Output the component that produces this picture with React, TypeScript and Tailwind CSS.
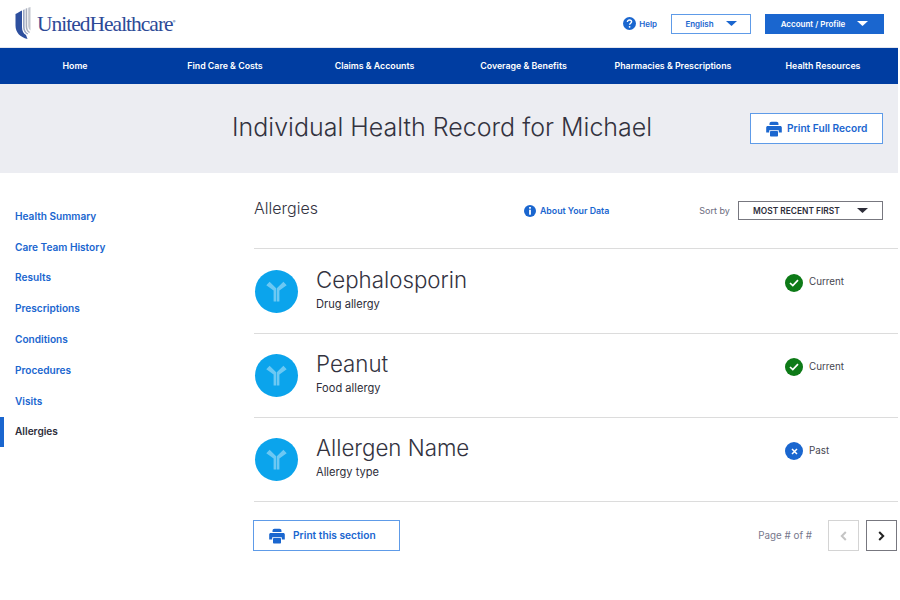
// App.tsx
import { ReactNode } from 'react';

const navItems: { label: string; w: string }[] = [
  { label: 'Home', w: 'w-[150px]' },
  { label: 'Find Care & Costs', w: 'w-[150px]' },
  { label: 'Claims & Accounts', w: 'w-[149px]' },
  { label: 'Coverage & Benefits', w: 'w-[149px]' },
  { label: 'Pharmacies & Prescriptions', w: 'w-[150px]' },
  { label: 'Health Resources', w: 'w-[150px]' },
];

const sideItems = [
  'Health Summary',
  'Care Team History',
  'Results',
  'Prescriptions',
  'Conditions',
  'Procedures',
  'Visits',
];

const allergies: { name: string; type: string; status: 'Current' | 'Past'; h: string }[] = [
  { name: 'Cephalosporin', type: 'Drug allergy', status: 'Current', h: 'h-[85px]' },
  { name: 'Peanut', type: 'Food allergy', status: 'Current', h: 'h-[84px]' },
  { name: 'Allergen Name', type: 'Allergy type', status: 'Past', h: 'h-[84px]' },
];

function Logo() {
  return (
    <div className="flex items-center">
      <svg width="16" height="33" viewBox="0 0 16 33" className="shrink-0">
        <path d="M0.5 7 C2.5 6 5 4.5 7 3.5 V20 C7 24 8.5 26.5 11 28 L12.5 32 C5 30 0.5 25.5 0.5 18.5 Z" fill="#2d4f9e" />
        <path d="M8 3 L9.6 2.2 V19.5 C9.6 23 10.8 25.3 13.2 26.5 L12.4 27.6 C9.6 26.2 8 23.5 8 19.5 Z" fill="#9aa6c2" />
        <path d="M10.6 1.7 L12.2 1 V19 C12.2 22 13 23.8 15 25 L14.2 26 C11.8 24.7 10.6 22.5 10.6 19 Z" fill="#a9afbd" />
        <path d="M13.2 0.7 L15.5 0 V23.5 C14 22.5 13.2 20.8 13.2 18.5 Z" fill="#c3c7cf" />
      </svg>
      <span className="ml-[6px] mt-[3px] font-['Liberation_Serif',serif] text-[21.5px] leading-none tracking-[-1px] text-[#2d4a97]">
        UnitedHealthcare
      </span>
      <span className="self-start mt-[13px] text-[4px] leading-none text-[#2d4a97]">®</span>
    </div>
  );
}

function Caret({ color }: { color: string }) {
  return (
    <svg width="11" height="5" viewBox="0 0 11 5" className="shrink-0">
      <path d="M0 0 H11 L5.5 5 Z" fill={color} />
    </svg>
  );
}

function PrinterIcon() {
  return (
    <svg width="16" height="16" viewBox="0 0 16 16" className="shrink-0">
      <path d="M3.5 3.2 C3.5 1.5 4.3 0.8 5.5 0.8 H10.5 C11.7 0.8 12.5 1.5 12.5 3.2 V4 H3.5 Z" fill="#1a66cf" />
      <path d="M1.8 5 H14.2 C15.2 5 15.8 5.7 15.8 6.6 V11.5 H12.8 V9.2 H3.2 V11.5 H0.2 V6.6 C0.2 5.7 0.8 5 1.8 5 Z" fill="#1a66cf" />
      <rect x="4" y="10" width="8" height="5.5" rx="0.8" fill="#1a66cf" />
    </svg>
  );
}

function AntibodyBadge() {
  return (
    <div className="flex h-[43px] w-[43px] shrink-0 items-center justify-center rounded-full bg-[#0ba4ec]">
      <svg width="21" height="21" viewBox="0 0 21 21">
        <path d="M0.3 4.2 L3.6 0.8 L10.2 7.2 V20.5 H7.6 V9.4 Z" fill="#6cc8f3" />
        <path d="M20.7 4.2 L17.4 0.8 L10.8 7.2 V20.5 H13.4 V9.4 Z" fill="#6cc8f3" />
      </svg>
    </div>
  );
}

function StatusIcon({ status }: { status: 'Current' | 'Past' }) {
  if (status === 'Current') {
    return (
      <span className="flex h-[18px] w-[18px] items-center justify-center rounded-full bg-[#0d7a17]">
        <svg width="10" height="8" viewBox="0 0 10 8">
          <path d="M1 4 L3.8 6.6 L9 1.2" fill="none" stroke="white" strokeWidth="1.7" />
        </svg>
      </span>
    );
  }
  return (
    <span className="flex h-[18px] w-[18px] items-center justify-center rounded-full bg-[#1a66cf]">
      <svg width="7" height="7" viewBox="0 0 7 7">
        <path d="M1 1 L6 6 M6 1 L1 6" fill="none" stroke="white" strokeWidth="1.5" />
      </svg>
    </span>
  );
}

function OutlineButton({ className, children }: { className: string; children: ReactNode }) {
  return (
    <button
      type="button"
      className={`flex items-center border border-[#5e9be8] bg-white font-semibold text-[#1a66cf] ${className}`}
    >
      <PrinterIcon />
      <span className="pt-px">{children}</span>
    </button>
  );
}

export default function App() {
  return (
    <div className="min-h-[600px] w-[898px] bg-white font-['Inter','Liberation_Sans',Arial,sans-serif] text-[#2d2d39]">
      <header className="flex h-[47px] items-center justify-between pl-[15px] pr-[14px]">
        <Logo />
        <div className="flex items-center">
          <svg width="13" height="13" viewBox="0 0 13 13" className="shrink-0">
            <circle cx="6.5" cy="6.5" r="6.5" fill="#1a66cf" />
            <path d="M4.4 5 C4.4 3.7 5.4 3 6.5 3 C7.7 3 8.6 3.7 8.6 4.8 C8.6 6.2 6.6 6.2 6.6 7.8" fill="none" stroke="white" strokeWidth="1.4" />
            <circle cx="6.6" cy="9.8" r="0.9" fill="white" />
          </svg>
          <span className="ml-[3px] text-[8px] font-semibold text-[#1a66cf]">Help</span>
          <button
            type="button"
            className="ml-[14px] flex h-[20px] w-[80px] items-center justify-center gap-[12px] border border-[#5e9be8] text-[8px] font-semibold text-[#1a66cf]"
          >
            English
            <Caret color="#1a66cf" />
          </button>
          <button
            type="button"
            className="ml-[14px] flex h-[20px] w-[119px] items-center justify-center gap-[12px] bg-[#1a66cf] text-[8px] font-semibold text-white"
          >
            Account / Profile
            <Caret color="#ffffff" />
          </button>
        </div>
      </header>

      <nav className="flex h-[37px] items-center border-t border-[#e4e6ee] bg-[#003da1]">
        {navItems.map(item => (
          <span key={item.label} className={`${item.w} text-center text-[8.8px] font-semibold text-white`}>
            {item.label}
          </span>
        ))}
      </nav>

      <section className="flex h-[89px] items-center bg-[#ecedf2] pr-[15px]">
        <h1 className="ml-[232px] -mt-[2px] text-[25px] font-light leading-none text-[#33333f]">
          Individual Health Record for Michael
        </h1>
        <OutlineButton className="ml-auto h-[31px] w-[133px] gap-[5px] pl-[15px] text-[10.2px]">Print Full Record</OutlineButton>
      </section>

      <div className="flex">
        <aside className="w-[254px] shrink-0 pt-[28px]">
          <ul className="flex flex-col">
            {sideItems.map(item => (
              <li key={item} className="flex h-[30.8px] items-center pl-[15px] text-[10.1px] font-semibold text-[#1a66cf]">
                {item}
              </li>
            ))}
            <li className="flex h-[30px] items-center border-l-[4px] border-[#1a66cf] pl-[11px] text-[10.1px] font-semibold text-[#2d2d39]">
              Allergies
            </li>
          </ul>
        </aside>

        <main className="flex-1">
          <div className="flex h-[76px] items-start border-b border-[#dcdcdc] pt-[26px]">
            <h2 className="text-[16px] font-light leading-[19px] text-[#33333f]">Allergies</h2>
            <div className="ml-[206px] mt-[5px] flex items-center">
              <svg width="12" height="12" viewBox="0 0 12 12" className="shrink-0">
                <circle cx="6" cy="6" r="6" fill="#1a66cf" />
                <rect x="5.1" y="2" width="1.8" height="1.7" fill="white" />
                <rect x="5.1" y="4.7" width="1.8" height="5" fill="white" />
              </svg>
              <span className="ml-[4px] text-[8.8px] font-semibold text-[#1a66cf]">About Your Data</span>
            </div>
            <span className="ml-[90px] mt-[5px] text-[9px] text-[#6c6c7e]">Sort by</span>
            <button
              type="button"
              className="ml-[8px] mt-[2px] flex h-[19px] w-[145px] items-center justify-center gap-[17px] border border-[#77777f] text-[8.4px] font-semibold text-[#2d2d39]"
            >
              <span className="pt-px">MOST RECENT FIRST</span>
              <Caret color="#2d2d39" />
            </button>
          </div>

          {allergies.map(a => (
            <div key={a.name} className={`flex ${a.h} items-center border-b border-[#dcdcdc] pl-px`}>
              <AntibodyBadge />
              <div className="ml-[18px] -mt-[6px] w-[469px]">
                <div className="text-[22.3px] font-light leading-[28px] text-[#33333f]">{a.name}</div>
                <div className="mt-[3px] text-[11.1px] leading-[14px] text-[#2d2d39]">{a.type}</div>
              </div>
              <div className="-mt-[17px] flex items-center gap-[6px] text-[9.8px] text-[#45454f]">
                <StatusIcon status={a.status} />
                {a.status}
              </div>
            </div>
          ))}

          <div className="-ml-px flex items-center pt-[18px]">
            <OutlineButton className="h-[31px] w-[147px] gap-[8px] pl-[15px] text-[10.2px]">Print this section</OutlineButton>
            <span className="ml-auto mt-[2px] text-[9.8px] text-[#77778c]">Page # of #</span>
            <button
              type="button"
              className="ml-[16px] flex h-[31px] w-[31px] items-center justify-center border border-[#d4d4d4]"
            >
              <svg width="7" height="10" viewBox="0 0 7 10">
                <path d="M5.8 1 L1.8 5 L5.8 9" fill="none" stroke="#c4c4c4" strokeWidth="2" />
              </svg>
            </button>
            <button
              type="button"
              className="ml-[7px] mr-px flex h-[31px] w-[31px] items-center justify-center border border-[#77777f]"
            >
              <svg width="7" height="10" viewBox="0 0 7 10">
                <path d="M1.2 1 L5.2 5 L1.2 9" fill="none" stroke="#222" strokeWidth="2" />
              </svg>
            </button>
          </div>
        </main>
      </div>
    </div>
  );
}
